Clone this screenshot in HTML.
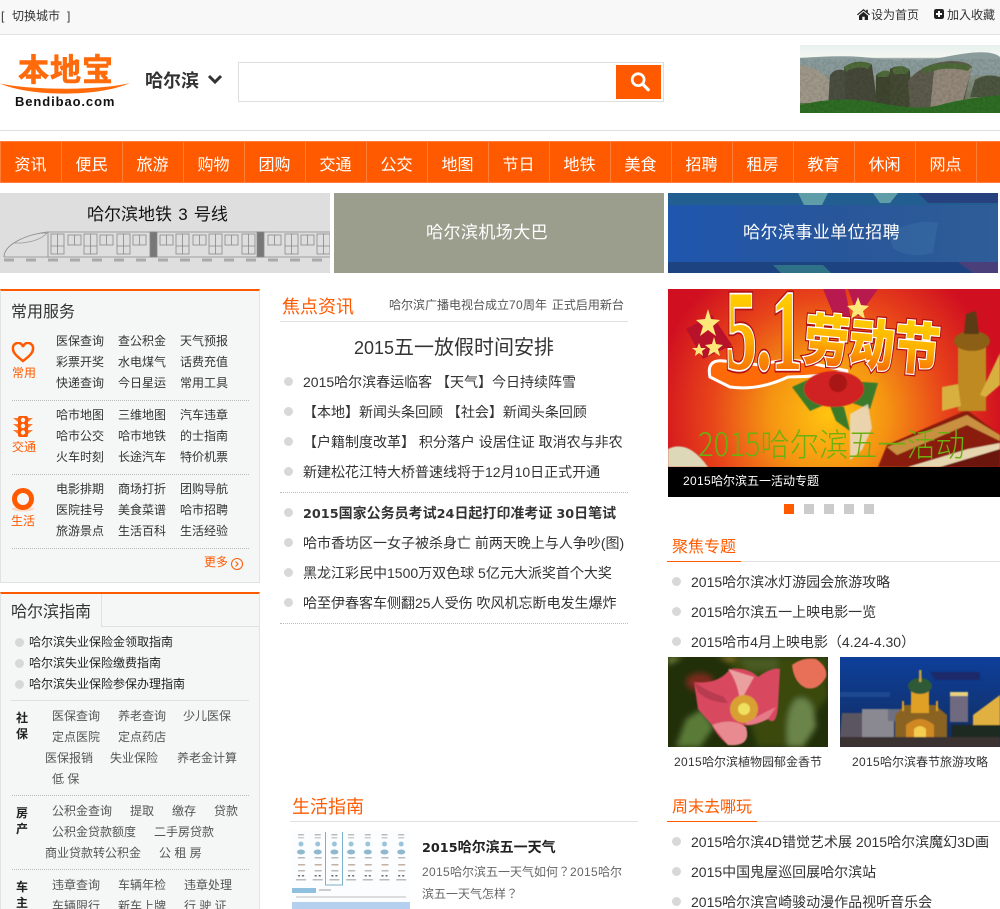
<!DOCTYPE html>
<html><head><meta charset="utf-8"><title>哈尔滨本地宝</title>
<style>
html{margin:0;padding:0;background:#fff;overflow:hidden;width:1000px;height:909px}
body{margin:0;padding:0;background:#fff;position:relative;width:1000px;height:909px;overflow:hidden;font-family:"Liberation Sans","Noto Sans CJK JP",sans-serif;font-size:12px;color:#333}
a,.t{position:absolute;white-space:nowrap;line-height:20px;color:inherit;text-decoration:none}
.b{position:absolute}
.o{color:#ff5a00}
.h{font-size:18px;color:#ff5a00}
.h16{font-size:16px;color:#ff5a00}
.n{font-size:16px;color:#fff;width:61px;text-align:center;top:156px}
.l{font-size:14px;color:#333}
.d{position:absolute;width:9px;height:9px;border-radius:50%;background:#d8d8d8}
.g{color:#555}
.k{font-weight:bold;color:#222}
.w{font:bold 12.800px "DejaVu Sans",sans-serif}
.x{letter-spacing:.33px}
.dot{position:absolute;height:0;border-top:1px dotted #bbb}
.line{position:absolute;height:1px;background:#e0e0e0}
.s{position:absolute;top:141px;width:1px;height:42px;background:#ff7e3a}
svg{position:absolute;display:block}
</style></head><body>

<!-- top bar -->
<div class="b" style="left:0;top:0;width:1000px;height:34px;background:#f8f8f8;border-bottom:1px solid #e3e3e3"></div>
<span class="t" style="left:1px;top:6px">[</span><span class="t" style="left:12px;top:6px">切换城市</span><span class="t" style="left:67px;top:6px">]</span>
<svg style="left:857px;top:9px" width="13" height="11" viewBox="0 0 13 11"><path d="M6.500 0 0 5.400l.8.9L6.500 1.600l5.700 4.700.8-.9L10.800 3.600V.8H9.200v1.500zM2 6.600V11h3.300V7.800h2.400V11H11V6.600L6.500 2.900z" fill="#222"/></svg>
<span class="t" style="left:871px;top:5px">设为首页</span>
<svg style="left:934px;top:9px" width="10" height="10" viewBox="0 0 10 10"><rect width="10" height="10" rx="2.200" fill="#222"/><path d="M4 2h2v2h2v2H6v2H4V6H2V4h2z" fill="#fff"/></svg>
<span class="t" style="left:947px;top:5px">加入收藏</span>

<!-- logo -->
<span class="t" style="left:18px;top:53px;font-size:31px;line-height:36px;font-weight:bold;color:#ff6a0a;letter-spacing:1px;-webkit-text-stroke:.6px #ff6a0a">本地宝</span>
<svg style="left:0;top:80px" width="130" height="16" viewBox="0 0 130 16"><path d="M0 3.500C30 10 95 11 130 3C100 17 30 17 0 3.500z" fill="#ff6a0a"/></svg>
<span class="t" style="left:15px;top:92px;font:bold 13px/20px 'Liberation Sans',sans-serif;letter-spacing:.9px;color:#111">Bendibao.com</span>
<span class="t" style="left:145px;top:71px;font-size:18px;font-weight:bold;color:#333">哈尔滨</span>
<svg style="left:207px;top:73px" width="16" height="12" viewBox="0 0 16 12"><path d="M2 3l6 6 6-6" fill="none" stroke="#333" stroke-width="3"/></svg>

<!-- search -->
<div class="b" style="left:238px;top:62px;width:424px;height:38px;border:1px solid #ddd;background:#fff"></div>
<div class="b" style="left:616px;top:65px;width:45px;height:34px;background:#ff5a00"></div>
<svg style="left:629px;top:70px" width="22" height="23" viewBox="0 0 24 24"><circle cx="10" cy="10" r="6.500" fill="none" stroke="#fff" stroke-width="3"/><path d="M15 15l6 6" stroke="#fff" stroke-width="3.500" stroke-linecap="round"/></svg>

<!-- landscape -->
<svg style="left:800px;top:45px" width="200" height="69" viewBox="0 0 200 69">
<defs><linearGradient id="sky" x1="0" y1="0" x2="0" y2="1"><stop offset="0" stop-color="#e6f0ef"/><stop offset=".18" stop-color="#f5f7f0"/><stop offset=".2" stop-color="#94a4a4"/><stop offset=".4" stop-color="#8d9a92"/><stop offset=".8" stop-color="#717c63"/><stop offset="1" stop-color="#3a6a2c"/></linearGradient>
<filter id="nz" x="0" y="0" width="100%" height="100%"><feTurbulence type="fractalNoise" baseFrequency=".35" numOctaves="2" seed="3"/><feColorMatrix values="0 0 0 0 0 0 0 0 0 0 0 0 0 0 0 0 0 0 1.100 -.38"/></filter></defs>
<rect width="200" height="68" fill="url(#sky)"/>
<path d="M0 13Q50 9 80 14T150 11T200 12V30H0z" fill="#8b9c9c"/>
<path d="M0 20Q18 22 30 36L38 58H0z" fill="#a0998a"/>
<path d="M30 30Q36 22 46 26L50 62H28z" fill="#4b4f42"/>
<path d="M44 22Q56 14 72 20L78 64H46z" fill="#46493a"/>
<path d="M76 30Q84 24 90 28L92 66H76z" fill="#3f4630"/>
<path d="M90 24Q100 18 110 26L112 66H90z" fill="#444a33"/>
<path d="M108 36Q122 18 150 16Q168 16 172 22L162 66H110z" fill="#5d5b4c"/>
<path d="M134 26Q154 18 172 23L160 66H130z" fill="#94897a"/>
<path d="M175 35Q185 28 200 32V52H170z" fill="#4d5640"/>
<path d="M44 22Q56 13 72 19L68 24Q55 20 46 27zM76 30Q84 23 90 27L88 32H78zM92 25Q100 17 110 25L106 29H94zM122 23Q145 14 172 21L168 26Q145 20 124 29z" fill="#4f6a3a"/>
<path d="M0 60Q40 50 80 58T140 60T200 50V68H0z" fill="#2f6d25"/>
<rect y="14" width="200" height="54" filter="url(#nz)" opacity=".22"/>
</svg>
<div class="line" style="left:0;top:130px;width:1000px;background:#ddd"></div>

<!-- nav -->
<div class="b" style="left:0;top:141px;width:1000px;height:42px;background:#ff5a00;box-shadow:inset 0 1px 0 #ff7e3a,inset 0 -1px 0 #ff7e3a"></div>
<i class="s" style="left:0"></i><i class="s" style="left:61px"></i><i class="s" style="left:122px"></i><i class="s" style="left:183px"></i><i class="s" style="left:244px"></i><i class="s" style="left:305px"></i><i class="s" style="left:366px"></i><i class="s" style="left:427px"></i><i class="s" style="left:488px"></i><i class="s" style="left:549px"></i><i class="s" style="left:610px"></i><i class="s" style="left:671px"></i><i class="s" style="left:732px"></i><i class="s" style="left:793px"></i><i class="s" style="left:854px"></i><i class="s" style="left:915px"></i><i class="s" style="left:976px"></i>
<a class="n" style="left:0">资讯</a><a class="n" style="left:61px">便民</a><a class="n" style="left:122px">旅游</a><a class="n" style="left:183px">购物</a><a class="n" style="left:244px">团购</a><a class="n" style="left:305px">交通</a><a class="n" style="left:366px">公交</a><a class="n" style="left:427px">地图</a><a class="n" style="left:488px">节日</a><a class="n" style="left:549px">地铁</a><a class="n" style="left:610px">美食</a><a class="n" style="left:671px">招聘</a><a class="n" style="left:732px">租房</a><a class="n" style="left:793px">教育</a><a class="n" style="left:854px">休闲</a><a class="n" style="left:915px">网点</a>

<!-- banners -->
<div class="b" style="left:0;top:193px;width:330px;height:80px;background:#dedede"></div>
<svg style="left:0;top:193px" width="330" height="80" viewBox="0 0 330 80" fill="none" stroke="#888" stroke-width=".8">
<path d="M4 64C4 52 24 42 47 39H330M4 64H330M48 39V64" />
<path d="M14 50Q30 40 47 40Q40 48 22 50z" stroke="#999"/>
<defs><g id="tw"><rect width="13" height="20"/><path d="M6.500 0V20M0 12H13"/></g><g id="sw"><rect width="13" height="10"/><path d="M6.500 0V10"/></g></defs>
<use href="#tw" x="51" y="41"/><use href="#sw" x="68" y="42"/><use href="#tw" x="84" y="41"/><use href="#sw" x="100" y="42"/><use href="#tw" x="117" y="41"/><use href="#sw" x="133" y="42"/>
<use href="#sw" x="160" y="42"/><use href="#tw" x="176" y="41"/><use href="#sw" x="193" y="42"/><use href="#tw" x="209" y="41"/><use href="#sw" x="225" y="42"/><use href="#tw" x="242" y="41"/>
<use href="#sw" x="268" y="42"/><use href="#tw" x="285" y="41"/><use href="#sw" x="301" y="42"/><use href="#tw" x="317" y="41"/>
<rect x="150" y="39" width="7" height="25" fill="#777"/><rect x="257" y="39" width="7" height="25" fill="#777"/>
<path d="M4 67H330" stroke="#aaa" stroke-width="3" stroke-dasharray="10 12"/>
</svg>
<span class="t" style="left:87px;top:205px;font-size:17px;word-spacing:1.500px;color:#111">哈尔滨地铁 3 号线</span>
<div class="b" style="left:334px;top:193px;width:330px;height:80px;background:#9b9d8d"></div>
<span class="t" style="left:426px;top:223px;font-size:17px;letter-spacing:.45px;color:#fff">哈尔滨机场大巴</span>
<svg style="left:668px;top:193px" width="330" height="80" viewBox="0 0 330 80">
<defs><linearGradient id="bl" x1="0" y1="0" x2="1" y2="0"><stop offset="0" stop-color="#1f56ae"/><stop offset=".5" stop-color="#28569a"/><stop offset="1" stop-color="#2e5d98"/></linearGradient></defs>
<rect width="330" height="80" fill="url(#bl)"/>
<rect width="330" height="12" fill="#225f90"/><rect y="69" width="330" height="11" fill="#1d4480"/>
<path d="M130 0h30l-6 12h-18zM205 0h25l-8 10h-10z" fill="#5f9ea8"/>
<path d="M250 0h80v10h-70z" fill="#27417f"/><path d="M290 69h40v11h-25z" fill="#4a3f78"/><path d="M105 72h50l8 8h-50z" fill="#2f7288"/>
<path d="M220 40Q250 25 270 30L265 60Q240 66 225 55z" fill="#3a6ea5" opacity=".5"/>
</svg>
<span class="t" style="left:743px;top:223px;font-size:17px;letter-spacing:.45px;color:#fff">哈尔滨事业单位招聘</span>

<!-- left panel 1 -->
<div class="b" style="left:0;top:289px;width:258px;height:291px;background:#f5f7f7;border:1px solid #e3e3e3;border-top:2px solid #ff5a00"></div>
<span class="t" style="left:11px;top:303px;font-size:16px">常用服务</span>
<svg style="left:11px;top:342px" width="24" height="21" viewBox="0 0 24 21"><path d="M12 19C4 13 2 10 2 7A5 5 0 0 1 12 5A5 5 0 0 1 22 7C22 10 20 13 12 19z" fill="none" stroke="#ff5a00" stroke-width="2.500"/></svg>
<span class="t o" style="left:12px;top:363px">常用</span>
<span class="t" style="left:56px;top:331px">医保查询</span><span class="t" style="left:118px;top:331px">查公积金</span><span class="t" style="left:180px;top:331px">天气预报</span>
<span class="t" style="left:56px;top:352px">彩票开奖</span><span class="t" style="left:118px;top:352px">水电煤气</span><span class="t" style="left:180px;top:352px">话费充值</span>
<span class="t" style="left:56px;top:373px">快递查询</span><span class="t" style="left:118px;top:373px">今日星运</span><span class="t" style="left:180px;top:373px">常用工具</span>
<div class="dot" style="left:12px;top:400px;width:237px"></div>
<svg style="left:13px;top:416px" width="20" height="22" viewBox="0 0 20 22"><rect x="5" y="0" width="10" height="21" rx="2" fill="#ff5a00"/><path d="M0 2h5v4zM20 2h-5v4zM0 8h5v4zM20 8h-5v4zM0 14h5v4zM20 14h-5v4z" fill="#ff7a30"/><circle cx="10" cy="4" r="2.200" fill="#f5f7f7"/><circle cx="10" cy="10" r="2.200" fill="#f5f7f7"/><circle cx="10" cy="16.500" r="2.200" fill="#f5f7f7"/></svg>
<span class="t o" style="left:12px;top:437px">交通</span>
<span class="t" style="left:56px;top:405px">哈市地图</span><span class="t" style="left:118px;top:405px">三维地图</span><span class="t" style="left:180px;top:405px">汽车违章</span>
<span class="t" style="left:56px;top:426px">哈市公交</span><span class="t" style="left:118px;top:426px">哈市地铁</span><span class="t" style="left:180px;top:426px">的士指南</span>
<span class="t" style="left:56px;top:447px">火车时刻</span><span class="t" style="left:118px;top:447px">长途汽车</span><span class="t" style="left:180px;top:447px">特价机票</span>
<div class="dot" style="left:12px;top:474px;width:237px"></div>
<svg style="left:11px;top:488px" width="24" height="24" viewBox="0 0 24 24"><ellipse cx="12" cy="21" rx="11" ry="2.500" fill="#ffd9c4"/><circle cx="12" cy="11" r="8.500" fill="none" stroke="#ff5a00" stroke-width="5"/></svg>
<span class="t o" style="left:11px;top:511px">生活</span>
<span class="t" style="left:56px;top:479px">电影排期</span><span class="t" style="left:118px;top:479px">商场打折</span><span class="t" style="left:180px;top:479px">团购导航</span>
<span class="t" style="left:56px;top:500px">医院挂号</span><span class="t" style="left:118px;top:500px">美食菜谱</span><span class="t" style="left:180px;top:500px">哈市招聘</span>
<span class="t" style="left:56px;top:521px">旅游景点</span><span class="t" style="left:118px;top:521px">生活百科</span><span class="t" style="left:180px;top:521px">生活经验</span>
<div class="dot" style="left:12px;top:548px;width:237px"></div>
<span class="t o" style="left:204px;top:552px">更多</span>
<svg style="left:230px;top:557px" width="14" height="14" viewBox="0 0 14 14"><circle cx="7" cy="7" r="5.500" fill="none" stroke="#ff5a00"/><path d="M5.500 4.500 8 7l-2.500 2.500" fill="none" stroke="#ff5a00"/></svg>

<!-- left panel 2 -->
<div class="b" style="left:0;top:592px;width:258px;height:320px;background:#f5f7f7;border:1px solid #e3e3e3;border-top:2px solid #ff5a00"></div>
<div class="line" style="left:1px;top:626px;width:258px"></div>
<div class="b" style="left:1px;top:594px;width:100px;height:33px;background:#f5f7f7;border-right:1px solid #e0e0e0"></div>
<span class="t" style="left:11px;top:603px;font-size:16px">哈尔滨指南</span>
<i class="d" style="left:15px;top:638px"></i><span class="t" style="left:29px;top:632px;color:#222">哈尔滨失业保险金领取指南</span>
<i class="d" style="left:15px;top:659px"></i><span class="t" style="left:29px;top:653px;color:#222">哈尔滨失业保险缴费指南</span>
<i class="d" style="left:15px;top:680px"></i><span class="t" style="left:29px;top:674px;color:#222">哈尔滨失业保险参保办理指南</span>
<div class="line" style="left:11px;top:700px;width:238px"></div>
<span class="t k" style="left:16px;top:708px">社</span><span class="t k" style="left:16px;top:724px">保</span>
<span class="t g" style="left:52px;top:706px">医保查询</span><span class="t g" style="left:118px;top:706px">养老查询</span><span class="t g" style="left:183px;top:706px">少儿医保</span>
<span class="t g" style="left:52px;top:727px">定点医院</span><span class="t g" style="left:118px;top:727px">定点药店</span>
<span class="t g" style="left:45px;top:748px">医保报销</span><span class="t g" style="left:110px;top:748px">失业保险</span><span class="t g" style="left:177px;top:748px">养老金计算</span>
<span class="t g" style="left:52px;top:769px">低 保</span>
<div class="dot" style="left:12px;top:795px;width:237px"></div>
<span class="t k" style="left:16px;top:803px">房</span><span class="t k" style="left:16px;top:819px">产</span>
<span class="t g" style="left:52px;top:801px">公积金查询</span><span class="t g" style="left:130px;top:801px">提取</span><span class="t g" style="left:172px;top:801px">缴存</span><span class="t g" style="left:214px;top:801px">贷款</span>
<span class="t g" style="left:52px;top:822px">公积金贷款额度</span><span class="t g" style="left:154px;top:822px">二手房贷款</span>
<span class="t g" style="left:45px;top:843px">商业贷款转公积金</span><span class="t g" style="left:159px;top:843px">公 租 房</span>
<div class="dot" style="left:12px;top:869px;width:237px"></div>
<span class="t k" style="left:16px;top:877px">车</span><span class="t k" style="left:16px;top:893px">主</span>
<span class="t g" style="left:52px;top:875px">违章查询</span><span class="t g" style="left:118px;top:875px">车辆年检</span><span class="t g" style="left:184px;top:875px">违章处理</span>
<span class="t g" style="left:52px;top:896px">车辆限行</span><span class="t g" style="left:118px;top:896px">新车上牌</span><span class="t g" style="left:184px;top:896px">行 驶 证</span>

<!-- center -->
<span class="t h" style="left:282px;top:297px">焦点资讯</span>
<span class="t g" style="left:389px;top:295px;word-spacing:1.500px">哈尔滨广播电视台成立<span class="x">70</span>周年 正式启用新台</span>
<div class="line" style="left:280px;top:321px;width:348px"></div>
<span class="t" style="left:354px;top:338px;font-size:20px"><span style="font-size:18px">2015</span>五一放假时间安排</span>
<i class="d" style="left:284px;top:377px"></i><span class="t l" style="left:303px;top:372px">2015哈尔滨春运临客 【天气】今日持续阵雪</span>
<i class="d" style="left:284px;top:407px"></i><span class="t l" style="left:303px;top:402px">【本地】新闻头条回顾 【社会】新闻头条回顾</span>
<i class="d" style="left:284px;top:437px"></i><span class="t l" style="left:303px;top:432px">【户籍制度改革】 积分落户 设居住证 取消农与非农</span>
<i class="d" style="left:284px;top:467px"></i><span class="t l" style="left:303px;top:462px">新建松花江特大桥普速线将于12月10日正式开通</span>
<div class="dot" style="left:280px;top:492px;width:348px"></div>
<i class="d" style="left:284px;top:508px"></i><span class="t l" style="left:303px;top:503px;font-weight:bold"><span class="w">2015</span>国家公务员考试<span class="w">24</span>日起打印准考证 <span class="w">30</span>日笔试</span>
<i class="d" style="left:284px;top:538px"></i><span class="t l" style="left:303px;top:533px">哈市香坊区一女子被杀身亡 前两天晚上与人争吵(图)</span>
<i class="d" style="left:284px;top:568px"></i><span class="t l" style="left:303px;top:563px">黑龙江彩民中1500万双色球 5亿元大派奖首个大奖</span>
<i class="d" style="left:284px;top:598px"></i><span class="t l" style="left:303px;top:593px">哈至伊春客车侧翻25人受伤 吹风机忘断电发生爆炸</span>
<div class="dot" style="left:280px;top:623px;width:348px"></div>

<span class="t h" style="left:292px;top:797px">生活指南</span>
<div class="line" style="left:290px;top:821px;width:348px"></div>
<svg style="left:292px;top:830px" width="118" height="79" viewBox="0 0 118 79">
<defs><pattern id="wc" patternUnits="userSpaceOnUse" width="16.700" height="56" x="0" y="0">
<rect x="6" y="4" width="6" height="1.500" fill="#bbb"/><rect x="6" y="7" width="6" height="1.500" fill="#ccc"/>
<circle cx="9" cy="14" r="2.500" fill="#9cc4d8"/>
<ellipse cx="9" cy="22" rx="4" ry="2.500" fill="#8fb8cc"/>
<rect x="6" y="27" width="7" height="1.500" fill="#bbb"/>
<rect x="6" y="34" width="7" height="1.500" fill="#c4b0a0"/><rect x="6" y="40" width="7" height="1.500" fill="#bbb"/>
<rect x="6" y="45" width="2" height="1.500" fill="#666"/><rect x="10" y="45" width="2" height="1.500" fill="#666"/>
<rect x="4" y="49" width="10" height="1.500" fill="#bbb"/>
</pattern></defs>
<rect width="118" height="79" fill="#fbfdfe"/>
<rect width="118" height="56" fill="url(#wc)"/>
<path d="M33.500 2V55H50.500V2" fill="none" stroke="#7eb0c8"/>
<rect x="0" y="58" width="24" height="5" fill="#8fc0e0"/><rect x="27" y="59" width="12" height="2" fill="#ccc"/>
<rect x="4" y="66" width="110" height="2" fill="#ddd"/>
<rect x="0" y="72" width="118" height="7" fill="#b5cfee"/>
</svg>
<span class="t" style="left:422px;top:837px;font-size:14px;font-weight:bold;color:#222"><span class="w">2015</span>哈尔滨五一天气</span>
<span class="t" style="left:422px;top:862px;color:#666"><span class="x">2015</span>哈尔滨五一天气如何？<span class="x">2015</span>哈尔</span>
<span class="t" style="left:422px;top:884px;color:#666">滨五一天气怎样？</span>

<!-- right slide -->
<svg style="left:668px;top:289px" width="332" height="178" viewBox="0 0 332 178">
<defs><radialGradient id="sl" gradientUnits="userSpaceOnUse" cx="160" cy="125" r="195"><stop offset="0" stop-color="#ffc410"/><stop offset=".3" stop-color="#f59412"/><stop offset=".6" stop-color="#e8441a"/><stop offset=".9" stop-color="#d01020"/></radialGradient>
<linearGradient id="gold" x1="0" y1="0" x2="0" y2="1"><stop offset="0" stop-color="#ffe000"/><stop offset=".55" stop-color="#ffb000"/><stop offset="1" stop-color="#f04a08"/></linearGradient>
<filter id="sb"><feGaussianBlur stdDeviation=".6"/></filter></defs>
<rect width="332" height="178" fill="url(#sl)"/>
<path d="M155 0h22l6 30-14 4zM180 0h30l-20 28z" fill="#b81a50"/>
<path d="M35 70 18 40l26-14 20 30z" fill="#b8122a"/>
<g fill="#ffe77a"><path d="M40 20l3 10 9 1-7 6 3 10-8-6-8 6 3-10-7-6 9-1z"/><path d="M46 48l2 7 7 1-5 4 2 7-6-4-6 4 2-7-5-4 7-1z"/><path d="M31 54l2 5 5 0-4 3 1 5-4-3-4 3 1-5-4-3 5 0z"/><path d="M190 8l3 8 8 1-6 5 2 8-7-5-7 5 2-8-6-5 8-1z"/></g>
<path d="M42 88Q38 70 56 72L92 76Q112 70 132 72L180 82Q150 88 120 88Q90 102 62 98z" fill="#ff6a08" stroke="#fff" stroke-width="3"/>
<g font-family="Liberation Serif,serif" font-weight="bold" font-size="113"><text x="58" y="80" textLength="76" lengthAdjust="spacingAndGlyphs" fill="none" stroke="#b01010" stroke-width="7">5.1</text><text x="58" y="80" textLength="76" lengthAdjust="spacingAndGlyphs" fill="url(#gold)" stroke="#fff" stroke-width="3.500" paint-order="stroke">5.1</text></g>
<g font-family="Noto Sans CJK SC,sans-serif" font-weight="900" font-size="56" transform="rotate(5 134 74)"><text x="134" y="70" textLength="136" lengthAdjust="spacingAndGlyphs" fill="none" stroke="#b01010" stroke-width="5">劳动节</text><text x="134" y="70" textLength="136" lengthAdjust="spacingAndGlyphs" fill="url(#gold)" stroke="#fff" stroke-width="2.500" paint-order="stroke">劳动节</text></g>
<g filter="url(#sb)">
<path d="M124 98l22-10 10 28-14 6zM180 92l30 2-8 26-18-6zM160 112l16 6 6 24-14-10z" fill="#3a7a2a"/>
<ellipse cx="166" cy="100" rx="30" ry="18" fill="#d02020"/><circle cx="170" cy="94" r="9" fill="#a81418"/>
<path d="M182 125l18-10 4 24-10 22-12 10z" fill="#e8dcc8" opacity=".85"/>
<path d="M0 178V160Q20 150 40 178z" fill="#ddd9b8"/>
<path d="M219 156l80-35 33 25v32H210z" fill="#8a1a10"/>
<path d="M219 158l80-32 33 20v6l-33-16-70 30z" fill="#c89040"/><path d="M250 178l82-24v24z" fill="#6a1410"/><path d="M240 178l60-18 32-6v6l-60 18z" fill="#e6d6b0"/>
<rect x="290" y="50" width="28" height="72" fill="#c08a20"/><ellipse cx="304" cy="52" rx="18" ry="10" fill="#8c5e12"/><path d="M296 45l2-20 10-3 3 23z" fill="#5a3a14"/>
<path d="M274 122l0-24 16-3 3 22zM312 106l20-42v32l-14 12z" fill="#d8b040"/>
</g>
<text x="30" y="167" font-family="Noto Sans CJK SC,sans-serif" font-size="32" font-weight="300" fill="#6cb010" textLength="267" lengthAdjust="spacingAndGlyphs">2015哈尔滨五一活动</text>
</svg>
<div class="b" style="left:668px;top:467px;width:332px;height:30px;background:#000"></div>
<span class="t" style="left:683px;top:471px;color:#fff"><span class="x">2015</span>哈尔滨五一活动专题</span>
<div class="b" style="left:784px;top:504px;width:10px;height:10px;background:#ff5a00"></div>
<div class="b" style="left:804px;top:504px;width:10px;height:10px;background:#ccc"></div>
<div class="b" style="left:824px;top:504px;width:10px;height:10px;background:#ccc"></div>
<div class="b" style="left:844px;top:504px;width:10px;height:10px;background:#ccc"></div>
<div class="b" style="left:864px;top:504px;width:10px;height:10px;background:#ccc"></div>

<span class="t h16" style="left:672px;top:538px">聚焦专题</span>
<div class="line" style="left:667px;top:561px;width:333px"></div><div class="line" style="left:667px;top:561px;width:74px;background:#ff5a00"></div>
<i class="d" style="left:672px;top:577px"></i><span class="t l" style="left:691px;top:572px">2015哈尔滨冰灯游园会旅游攻略</span>
<i class="d" style="left:672px;top:607px"></i><span class="t l" style="left:691px;top:602px">2015哈尔滨五一上映电影一览</span>
<i class="d" style="left:672px;top:637px"></i><span class="t l" style="left:691px;top:632px">2015哈市4月上映电影（4.24-4.30）</span>

<svg style="left:668px;top:657px" width="160" height="90" viewBox="0 0 160 90">
<defs><filter id="bb"><feGaussianBlur stdDeviation="3"/></filter><filter id="b1"><feGaussianBlur stdDeviation=".6"/></filter></defs>
<rect width="160" height="90" fill="#22300a"/>
<g filter="url(#bb)">
<path d="M60 0H160V40L120 90H90z" fill="#3a4a10"/><path d="M0 0h15L0 8z" fill="#7a8a40"/><path d="M50 0h20l-10 4z" fill="#b09030"/><path d="M70 0h40v14H80z" fill="#4a5a20"/>
<path d="M18 62l16-10 12 18-14 20H8z" fill="#5a7a38"/>
<path d="M128 42Q146 36 148 70L135 90H120Q116 55 128 42z" fill="#6a8448"/>
<ellipse cx="32" cy="25" rx="14" ry="9" fill="#7a2a1a"/>
</g>
<g filter="url(#b1)">
<path d="M124 8Q134 0 148 2Q160 10 158 20Q150 34 138 31Q126 26 124 8z" fill="#e87058"/>
<path d="M26 25Q50 28 62 12Q80 10 90 20Q104 10 112 12L110 50Q108 70 100 62Q84 70 76 68Q84 90 60 88Q48 78 44 68L30 52z" fill="#d84860"/>
<path d="M60 12Q70 25 72 45L86 20z" fill="#eba0a0"/>
<path d="M26 25Q40 35 56 40L60 46Q40 45 30 35z" fill="#b83a50"/>
<circle cx="76" cy="52" r="14" fill="#d8a030"/><circle cx="76" cy="52" r="6" fill="#f0e060"/>
<path d="M44 68Q64 60 78 70Q84 90 60 88z" fill="#e88a90"/>
<path d="M78 66Q95 56 108 50L100 62Q88 68 78 68z" fill="#e67a88"/>
</g>
</svg>
<svg style="left:840px;top:657px" width="160" height="90" viewBox="0 0 160 90">
<defs><linearGradient id="ns" x1="0" y1="0" x2="0" y2="1"><stop offset="0" stop-color="#0e3f9a"/><stop offset=".6" stop-color="#103476"/><stop offset="1" stop-color="#1a2a50"/></linearGradient></defs>
<rect width="160" height="90" fill="url(#ns)"/>
<g filter="url(#b1)">
<path d="M90 15h50v8H95z" fill="#1a2a6a"/><path d="M0 35h50v5H0z" fill="#1a4a90"/>
<path d="M2 56h30l3 24H0z" fill="#5a5560"/><path d="M22 52h32v28H22z" fill="#8a8890"/><rect x="48" y="52" width="14" height="12" fill="#6c7080"/>
<rect x="110" y="35" width="18" height="30" fill="#706a80"/><rect x="110" y="35" width="18" height="4" fill="#e8d080"/>
<path d="M133 58l27-20V72H133z" fill="#e0b040"/>
<path d="M112 68h48v12h-48z" fill="#1f2a24"/>
<path d="M55 80V58l10-10h30l12 10v22z" fill="#8a6420"/>
<rect x="71" y="34" width="18" height="22" fill="#e0a028"/>
<ellipse cx="80" cy="29" rx="12" ry="8" fill="#2f5a38"/><rect x="79" y="13" width="2.500" height="12" fill="#c0a040"/>
<rect x="62" y="44" width="2" height="10" fill="#e0a028"/><rect x="96" y="44" width="2" height="10" fill="#e0a028"/>
<path d="M66 80V68Q80 56 94 68V80z" fill="#d08820"/><path d="M74 80V72Q80 66 86 72V80z" fill="#f4cc50"/>
<rect y="80" width="160" height="10" fill="#3a3030"/>
</g>
</svg>
<span class="t" style="left:674px;top:752px"><span class="x">2015</span>哈尔滨植物园郁金香节</span>
<span class="t" style="left:852px;top:752px"><span class="x">2015</span>哈尔滨春节旅游攻略</span>

<span class="t h16" style="left:672px;top:798px">周末去哪玩</span>
<div class="line" style="left:667px;top:821px;width:333px"></div><div class="line" style="left:667px;top:821px;width:90px;background:#ff5a00"></div>
<i class="d" style="left:672px;top:837px"></i><span class="t l" style="left:691px;top:832px">2015哈尔滨4D错觉艺术展 2015哈尔滨魔幻3D画</span>
<i class="d" style="left:672px;top:867px"></i><span class="t l" style="left:691px;top:862px">2015中国鬼屋巡回展哈尔滨站</span>
<i class="d" style="left:672px;top:897px"></i><span class="t l" style="left:691px;top:892px">2015哈尔滨宫崎骏动漫作品视听音乐会</span>

</body></html>
